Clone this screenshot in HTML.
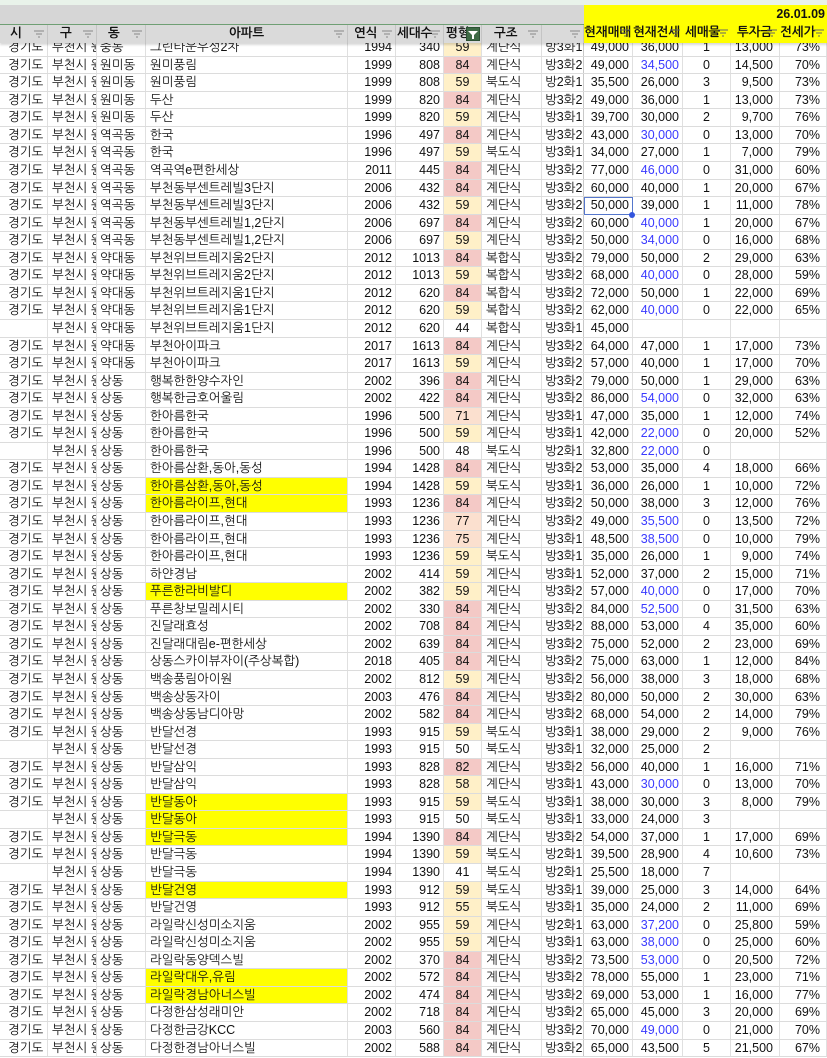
<!DOCTYPE html>
<html><head><meta charset="utf-8"><style>
*{margin:0;padding:0;box-sizing:border-box}
body{width:827px;height:1058px;overflow:hidden;background:#fff;position:relative;font-family:"Liberation Sans","NanumGothic","Noto Sans CJK KR",sans-serif;font-size:12.5px;color:#111}
.r{position:absolute;left:0;width:827px;height:17.6px;top:calc(39.15px + var(--n)*17.55px);display:flex;border-bottom:1px solid #dcdcdc;line-height:17px}
.r i{font-style:normal;display:block;height:100%;overflow:hidden;white-space:nowrap;border-right:1px solid #e0e0e0;padding:0 3px}
.r i:nth-child(1){width:48px;padding-left:8px}
.r i:nth-child(2){width:49px;padding-left:4px}
.r i:nth-child(3){width:49px;padding-left:3px}
.r i:nth-child(4){width:202px;padding-left:4px}
.r i:nth-child(5){width:48px;text-align:right}
.r i:nth-child(6){width:48px;text-align:right}
.r i:nth-child(7){width:38px;text-align:center}
.r i:nth-child(8){width:60px;padding-left:4px}
.r i:nth-child(9){width:42px;text-align:right;padding-right:1px;border-right:1px solid #c8c8c8}
.r i:nth-child(10){width:49px;text-align:right}
.r i:nth-child(11){width:50px;text-align:right}
.r i:nth-child(12){width:48px;text-align:center}
.r i:nth-child(13){width:49px;text-align:right;padding-right:6px}
.r i:nth-child(14){width:47px;text-align:right;padding-right:6px}
.r i.h{background:#ffff00}
.r i.p{background:#f4c9c6}
.r i.y{background:#fff0c8}
.r i.o{background:#fbe0cf}
.r i.b{color:#3a3aff}
.top{position:absolute;left:0;top:0;width:827px;height:5px;background:#e9f3ea;z-index:5}
.band{position:absolute;left:0;top:5px;width:827px;height:19px;background:#d6d6d6;z-index:5}
.hdr{position:absolute;left:0;top:24px;width:827px;height:19px;background:#dadada;border-top:1px solid #6f9f74;z-index:5;display:flex;font-weight:bold;font-size:12.5px;line-height:17px;box-shadow:0 2px 2px rgba(0,0,0,.15)}
.hdr i{font-style:normal;display:block;height:100%;overflow:hidden;white-space:nowrap;position:relative;border-right:1px solid #c4c4c4}
.hdr svg{position:absolute;right:3px;top:5px}
.yel{position:absolute;left:584px;top:5px;width:243px;height:38px;background:#ffff00;z-index:6}
.yel b{position:absolute;right:2px;top:2px;font-size:12.5px}
.yel .hd{position:absolute;top:19px;left:0;display:flex;font-weight:bold;line-height:17px}
.yel .hd i{font-style:normal;display:block;overflow:hidden;white-space:nowrap;position:relative;height:18px}
.yel .hd svg{position:absolute;right:3px;top:5px}
.sel{position:absolute;left:584px;top:calc(39.15px + 9*17.55px);width:49px;height:18px;border:1.5px solid #5577cc;z-index:3}
.dot{position:absolute;left:629px;top:calc(39.15px + 10*17.55px - 3px);width:6px;height:6px;border-radius:3px;background:#3355dd;z-index:4}
</style></head><body>
<div class="top"></div>
<div class="band"></div>
<div class="hdr">
<i style="width:48px;padding-left:10px">시<svg width="10" height="8"><path d="M0 1H10M2 4H8M4 7H6" stroke="#888" stroke-width="1"/></svg></i>
<i style="width:49px;padding-left:12px">구<svg width="10" height="8"><path d="M0 1H10M2 4H8M4 7H6" stroke="#888" stroke-width="1"/></svg></i>
<i style="width:49px;padding-left:11px">동<svg width="10" height="8"><path d="M0 1H10M2 4H8M4 7H6" stroke="#888" stroke-width="1"/></svg></i>
<i style="width:202px;text-align:center">아파트<svg width="10" height="8"><path d="M0 1H10M2 4H8M4 7H6" stroke="#888" stroke-width="1"/></svg></i>
<i style="width:48px;padding-left:6px">연식<svg width="10" height="8"><path d="M0 1H10M2 4H8M4 7H6" stroke="#888" stroke-width="1"/></svg></i>
<i style="width:48px;padding-left:1px">세대수<svg width="10" height="8"><path d="M0 1H10M2 4H8M4 7H6" stroke="#888" stroke-width="1"/></svg></i>
<i style="width:38px;padding-left:2px">평형<span style="position:absolute;right:1px;top:2px;width:14px;height:14px;background:#3e6b45;border:1px solid #2c5133"><svg width="10" height="8" style="right:1px;top:3px"><path d="M0 0H10L6 4V8H4V4Z" fill="#fff"/></svg></span></i>
<i style="width:60px;padding-left:12px">구조<svg width="10" height="8"><path d="M0 1H10M2 4H8M4 7H6" stroke="#888" stroke-width="1"/></svg></i>
<i style="width:42px"><svg width="10" height="8"><path d="M0 1H10M2 4H8M4 7H6" stroke="#888" stroke-width="1"/></svg></i>
</div>
<div class="yel"><b>26.01.09</b>
<div class="hd">
<i style="width:49px">현재매매<svg width="10" height="8"><path d="M0 1H10M2 4H8M4 7H6" stroke="#666" stroke-width="1"/></svg></i>
<i style="width:50px">현재전세<svg width="10" height="8"><path d="M0 1H10M2 4H8M4 7H6" stroke="#666" stroke-width="1"/></svg></i>
<i style="width:48px;padding-left:2px">세매물<svg width="10" height="8"><path d="M0 1H10M2 4H8M4 7H6" stroke="#666" stroke-width="1"/></svg></i>
<i style="width:49px;padding-left:6px">투자금<svg width="10" height="8"><path d="M0 1H10M2 4H8M4 7H6" stroke="#666" stroke-width="1"/></svg></i>
<i style="width:47px">전세가<svg width="10" height="8"><path d="M0 1H10M2 4H8M4 7H6" stroke="#666" stroke-width="1"/></svg></i>
</div></div>

<div class="r" style="--n:0"><i>경기도</i><i>부천시 원미구</i><i>중동</i><i>그린타운우성2차</i><i>1994</i><i>340</i><i class="y">59</i><i>계단식</i><i>방3화1</i><i>49,000</i><i>36,000</i><i>1</i><i>13,000</i><i>73%</i></div>
<div class="r" style="--n:1"><i>경기도</i><i>부천시 원미구</i><i>원미동</i><i>원미풍림</i><i>1999</i><i>808</i><i class="p">84</i><i>계단식</i><i>방3화2</i><i>49,000</i><i class="b">34,500</i><i>0</i><i>14,500</i><i>70%</i></div>
<div class="r" style="--n:2"><i>경기도</i><i>부천시 원미구</i><i>원미동</i><i>원미풍림</i><i>1999</i><i>808</i><i class="y">59</i><i>북도식</i><i>방2화1</i><i>35,500</i><i>26,000</i><i>3</i><i>9,500</i><i>73%</i></div>
<div class="r" style="--n:3"><i>경기도</i><i>부천시 원미구</i><i>원미동</i><i>두산</i><i>1999</i><i>820</i><i class="p">84</i><i>계단식</i><i>방3화2</i><i>49,000</i><i>36,000</i><i>1</i><i>13,000</i><i>73%</i></div>
<div class="r" style="--n:4"><i>경기도</i><i>부천시 원미구</i><i>원미동</i><i>두산</i><i>1999</i><i>820</i><i class="y">59</i><i>계단식</i><i>방3화1</i><i>39,700</i><i>30,000</i><i>2</i><i>9,700</i><i>76%</i></div>
<div class="r" style="--n:5"><i>경기도</i><i>부천시 원미구</i><i>역곡동</i><i>한국</i><i>1996</i><i>497</i><i class="p">84</i><i>계단식</i><i>방3화2</i><i>43,000</i><i class="b">30,000</i><i>0</i><i>13,000</i><i>70%</i></div>
<div class="r" style="--n:6"><i>경기도</i><i>부천시 원미구</i><i>역곡동</i><i>한국</i><i>1996</i><i>497</i><i class="y">59</i><i>북도식</i><i>방3화1</i><i>34,000</i><i>27,000</i><i>1</i><i>7,000</i><i>79%</i></div>
<div class="r" style="--n:7"><i>경기도</i><i>부천시 원미구</i><i>역곡동</i><i>역곡역e편한세상</i><i>2011</i><i>445</i><i class="p">84</i><i>계단식</i><i>방3화2</i><i>77,000</i><i class="b">46,000</i><i>0</i><i>31,000</i><i>60%</i></div>
<div class="r" style="--n:8"><i>경기도</i><i>부천시 원미구</i><i>역곡동</i><i>부천동부센트레빌3단지</i><i>2006</i><i>432</i><i class="p">84</i><i>계단식</i><i>방3화2</i><i>60,000</i><i>40,000</i><i>1</i><i>20,000</i><i>67%</i></div>
<div class="r" style="--n:9"><i>경기도</i><i>부천시 원미구</i><i>역곡동</i><i>부천동부센트레빌3단지</i><i>2006</i><i>432</i><i class="y">59</i><i>계단식</i><i>방3화2</i><i>50,000</i><i>39,000</i><i>1</i><i>11,000</i><i>78%</i></div>
<div class="r" style="--n:10"><i>경기도</i><i>부천시 원미구</i><i>역곡동</i><i>부천동부센트레빌1,2단지</i><i>2006</i><i>697</i><i class="p">84</i><i>계단식</i><i>방3화2</i><i>60,000</i><i class="b">40,000</i><i>1</i><i>20,000</i><i>67%</i></div>
<div class="r" style="--n:11"><i>경기도</i><i>부천시 원미구</i><i>역곡동</i><i>부천동부센트레빌1,2단지</i><i>2006</i><i>697</i><i class="y">59</i><i>계단식</i><i>방3화2</i><i>50,000</i><i class="b">34,000</i><i>0</i><i>16,000</i><i>68%</i></div>
<div class="r" style="--n:12"><i>경기도</i><i>부천시 원미구</i><i>약대동</i><i>부천위브트레지움2단지</i><i>2012</i><i>1013</i><i class="p">84</i><i>복합식</i><i>방3화2</i><i>79,000</i><i>50,000</i><i>2</i><i>29,000</i><i>63%</i></div>
<div class="r" style="--n:13"><i>경기도</i><i>부천시 원미구</i><i>약대동</i><i>부천위브트레지움2단지</i><i>2012</i><i>1013</i><i class="y">59</i><i>복합식</i><i>방3화2</i><i>68,000</i><i class="b">40,000</i><i>0</i><i>28,000</i><i>59%</i></div>
<div class="r" style="--n:14"><i>경기도</i><i>부천시 원미구</i><i>약대동</i><i>부천위브트레지움1단지</i><i>2012</i><i>620</i><i class="p">84</i><i>복합식</i><i>방3화2</i><i>72,000</i><i>50,000</i><i>1</i><i>22,000</i><i>69%</i></div>
<div class="r" style="--n:15"><i>경기도</i><i>부천시 원미구</i><i>약대동</i><i>부천위브트레지움1단지</i><i>2012</i><i>620</i><i class="y">59</i><i>복합식</i><i>방3화2</i><i>62,000</i><i class="b">40,000</i><i>0</i><i>22,000</i><i>65%</i></div>
<div class="r" style="--n:16"><i></i><i>부천시 원미구</i><i>약대동</i><i>부천위브트레지움1단지</i><i>2012</i><i>620</i><i>44</i><i>복합식</i><i>방3화1</i><i>45,000</i><i></i><i></i><i></i><i></i></div>
<div class="r" style="--n:17"><i>경기도</i><i>부천시 원미구</i><i>약대동</i><i>부천아이파크</i><i>2017</i><i>1613</i><i class="p">84</i><i>계단식</i><i>방3화2</i><i>64,000</i><i>47,000</i><i>1</i><i>17,000</i><i>73%</i></div>
<div class="r" style="--n:18"><i>경기도</i><i>부천시 원미구</i><i>약대동</i><i>부천아이파크</i><i>2017</i><i>1613</i><i class="y">59</i><i>계단식</i><i>방3화2</i><i>57,000</i><i>40,000</i><i>1</i><i>17,000</i><i>70%</i></div>
<div class="r" style="--n:19"><i>경기도</i><i>부천시 원미구</i><i>상동</i><i>행복한한양수자인</i><i>2002</i><i>396</i><i class="p">84</i><i>계단식</i><i>방3화2</i><i>79,000</i><i>50,000</i><i>1</i><i>29,000</i><i>63%</i></div>
<div class="r" style="--n:20"><i>경기도</i><i>부천시 원미구</i><i>상동</i><i>행복한금호어울림</i><i>2002</i><i>422</i><i class="p">84</i><i>계단식</i><i>방3화2</i><i>86,000</i><i class="b">54,000</i><i>0</i><i>32,000</i><i>63%</i></div>
<div class="r" style="--n:21"><i>경기도</i><i>부천시 원미구</i><i>상동</i><i>한아름한국</i><i>1996</i><i>500</i><i class="o">71</i><i>계단식</i><i>방3화1</i><i>47,000</i><i>35,000</i><i>1</i><i>12,000</i><i>74%</i></div>
<div class="r" style="--n:22"><i>경기도</i><i>부천시 원미구</i><i>상동</i><i>한아름한국</i><i>1996</i><i>500</i><i class="y">59</i><i>계단식</i><i>방3화1</i><i>42,000</i><i class="b">22,000</i><i>0</i><i>20,000</i><i>52%</i></div>
<div class="r" style="--n:23"><i></i><i>부천시 원미구</i><i>상동</i><i>한아름한국</i><i>1996</i><i>500</i><i>48</i><i>북도식</i><i>방2화1</i><i>32,800</i><i class="b">22,000</i><i>0</i><i></i><i></i></div>
<div class="r" style="--n:24"><i>경기도</i><i>부천시 원미구</i><i>상동</i><i>한아름삼환,동아,동성</i><i>1994</i><i>1428</i><i class="p">84</i><i>계단식</i><i>방3화2</i><i>53,000</i><i>35,000</i><i>4</i><i>18,000</i><i>66%</i></div>
<div class="r" style="--n:25"><i>경기도</i><i>부천시 원미구</i><i>상동</i><i class="h">한아름삼환,동아,동성</i><i>1994</i><i>1428</i><i class="y">59</i><i>북도식</i><i>방3화1</i><i>36,000</i><i>26,000</i><i>1</i><i>10,000</i><i>72%</i></div>
<div class="r" style="--n:26"><i>경기도</i><i>부천시 원미구</i><i>상동</i><i class="h">한아름라이프,현대</i><i>1993</i><i>1236</i><i class="p">84</i><i>계단식</i><i>방3화2</i><i>50,000</i><i>38,000</i><i>3</i><i>12,000</i><i>76%</i></div>
<div class="r" style="--n:27"><i>경기도</i><i>부천시 원미구</i><i>상동</i><i>한아름라이프,현대</i><i>1993</i><i>1236</i><i class="o">77</i><i>계단식</i><i>방3화2</i><i>49,000</i><i class="b">35,500</i><i>0</i><i>13,500</i><i>72%</i></div>
<div class="r" style="--n:28"><i>경기도</i><i>부천시 원미구</i><i>상동</i><i>한아름라이프,현대</i><i>1993</i><i>1236</i><i class="o">75</i><i>계단식</i><i>방3화1</i><i>48,500</i><i class="b">38,500</i><i>0</i><i>10,000</i><i>79%</i></div>
<div class="r" style="--n:29"><i>경기도</i><i>부천시 원미구</i><i>상동</i><i>한아름라이프,현대</i><i>1993</i><i>1236</i><i class="y">59</i><i>북도식</i><i>방3화1</i><i>35,000</i><i>26,000</i><i>1</i><i>9,000</i><i>74%</i></div>
<div class="r" style="--n:30"><i>경기도</i><i>부천시 원미구</i><i>상동</i><i>하얀경남</i><i>2002</i><i>414</i><i class="y">59</i><i>계단식</i><i>방3화1</i><i>52,000</i><i>37,000</i><i>2</i><i>15,000</i><i>71%</i></div>
<div class="r" style="--n:31"><i>경기도</i><i>부천시 원미구</i><i>상동</i><i class="h">푸른한라비발디</i><i>2002</i><i>382</i><i class="y">59</i><i>계단식</i><i>방3화2</i><i>57,000</i><i class="b">40,000</i><i>0</i><i>17,000</i><i>70%</i></div>
<div class="r" style="--n:32"><i>경기도</i><i>부천시 원미구</i><i>상동</i><i>푸른창보밀레시티</i><i>2002</i><i>330</i><i class="p">84</i><i>계단식</i><i>방3화2</i><i>84,000</i><i class="b">52,500</i><i>0</i><i>31,500</i><i>63%</i></div>
<div class="r" style="--n:33"><i>경기도</i><i>부천시 원미구</i><i>상동</i><i>진달래효성</i><i>2002</i><i>708</i><i class="p">84</i><i>계단식</i><i>방3화2</i><i>88,000</i><i>53,000</i><i>4</i><i>35,000</i><i>60%</i></div>
<div class="r" style="--n:34"><i>경기도</i><i>부천시 원미구</i><i>상동</i><i>진달래대림e-편한세상</i><i>2002</i><i>639</i><i class="p">84</i><i>계단식</i><i>방3화2</i><i>75,000</i><i>52,000</i><i>2</i><i>23,000</i><i>69%</i></div>
<div class="r" style="--n:35"><i>경기도</i><i>부천시 원미구</i><i>상동</i><i>상동스카이뷰자이(주상복합)</i><i>2018</i><i>405</i><i class="p">84</i><i>계단식</i><i>방3화2</i><i>75,000</i><i>63,000</i><i>1</i><i>12,000</i><i>84%</i></div>
<div class="r" style="--n:36"><i>경기도</i><i>부천시 원미구</i><i>상동</i><i>백송풍림아이원</i><i>2002</i><i>812</i><i class="y">59</i><i>계단식</i><i>방3화2</i><i>56,000</i><i>38,000</i><i>3</i><i>18,000</i><i>68%</i></div>
<div class="r" style="--n:37"><i>경기도</i><i>부천시 원미구</i><i>상동</i><i>백송상동자이</i><i>2003</i><i>476</i><i class="p">84</i><i>계단식</i><i>방3화2</i><i>80,000</i><i>50,000</i><i>2</i><i>30,000</i><i>63%</i></div>
<div class="r" style="--n:38"><i>경기도</i><i>부천시 원미구</i><i>상동</i><i>백송상동남디아망</i><i>2002</i><i>582</i><i class="p">84</i><i>계단식</i><i>방3화2</i><i>68,000</i><i>54,000</i><i>2</i><i>14,000</i><i>79%</i></div>
<div class="r" style="--n:39"><i>경기도</i><i>부천시 원미구</i><i>상동</i><i>반달선경</i><i>1993</i><i>915</i><i class="y">59</i><i>북도식</i><i>방3화1</i><i>38,000</i><i>29,000</i><i>2</i><i>9,000</i><i>76%</i></div>
<div class="r" style="--n:40"><i></i><i>부천시 원미구</i><i>상동</i><i>반달선경</i><i>1993</i><i>915</i><i>50</i><i>북도식</i><i>방3화1</i><i>32,000</i><i>25,000</i><i>2</i><i></i><i></i></div>
<div class="r" style="--n:41"><i>경기도</i><i>부천시 원미구</i><i>상동</i><i>반달삼익</i><i>1993</i><i>828</i><i class="p">82</i><i>계단식</i><i>방3화2</i><i>56,000</i><i>40,000</i><i>1</i><i>16,000</i><i>71%</i></div>
<div class="r" style="--n:42"><i>경기도</i><i>부천시 원미구</i><i>상동</i><i>반달삼익</i><i>1993</i><i>828</i><i class="y">58</i><i>계단식</i><i>방3화1</i><i>43,000</i><i class="b">30,000</i><i>0</i><i>13,000</i><i>70%</i></div>
<div class="r" style="--n:43"><i>경기도</i><i>부천시 원미구</i><i>상동</i><i class="h">반달동아</i><i>1993</i><i>915</i><i class="y">59</i><i>북도식</i><i>방3화1</i><i>38,000</i><i>30,000</i><i>3</i><i>8,000</i><i>79%</i></div>
<div class="r" style="--n:44"><i></i><i>부천시 원미구</i><i>상동</i><i class="h">반달동아</i><i>1993</i><i>915</i><i>50</i><i>북도식</i><i>방3화1</i><i>33,000</i><i>24,000</i><i>3</i><i></i><i></i></div>
<div class="r" style="--n:45"><i>경기도</i><i>부천시 원미구</i><i>상동</i><i class="h">반달극동</i><i>1994</i><i>1390</i><i class="p">84</i><i>계단식</i><i>방3화2</i><i>54,000</i><i>37,000</i><i>1</i><i>17,000</i><i>69%</i></div>
<div class="r" style="--n:46"><i>경기도</i><i>부천시 원미구</i><i>상동</i><i>반달극동</i><i>1994</i><i>1390</i><i class="y">59</i><i>북도식</i><i>방2화1</i><i>39,500</i><i>28,900</i><i>4</i><i>10,600</i><i>73%</i></div>
<div class="r" style="--n:47"><i></i><i>부천시 원미구</i><i>상동</i><i>반달극동</i><i>1994</i><i>1390</i><i>41</i><i>북도식</i><i>방2화1</i><i>25,500</i><i>18,000</i><i>7</i><i></i><i></i></div>
<div class="r" style="--n:48"><i>경기도</i><i>부천시 원미구</i><i>상동</i><i class="h">반달건영</i><i>1993</i><i>912</i><i class="y">59</i><i>북도식</i><i>방3화1</i><i>39,000</i><i>25,000</i><i>3</i><i>14,000</i><i>64%</i></div>
<div class="r" style="--n:49"><i>경기도</i><i>부천시 원미구</i><i>상동</i><i>반달건영</i><i>1993</i><i>912</i><i class="y">55</i><i>북도식</i><i>방3화1</i><i>35,000</i><i>24,000</i><i>2</i><i>11,000</i><i>69%</i></div>
<div class="r" style="--n:50"><i>경기도</i><i>부천시 원미구</i><i>상동</i><i>라일락신성미소지움</i><i>2002</i><i>955</i><i class="y">59</i><i>계단식</i><i>방2화1</i><i>63,000</i><i class="b">37,200</i><i>0</i><i>25,800</i><i>59%</i></div>
<div class="r" style="--n:51"><i>경기도</i><i>부천시 원미구</i><i>상동</i><i>라일락신성미소지움</i><i>2002</i><i>955</i><i class="y">59</i><i>계단식</i><i>방3화1</i><i>63,000</i><i class="b">38,000</i><i>0</i><i>25,000</i><i>60%</i></div>
<div class="r" style="--n:52"><i>경기도</i><i>부천시 원미구</i><i>상동</i><i>라일락동양덱스빌</i><i>2002</i><i>370</i><i class="p">84</i><i>계단식</i><i>방3화2</i><i>73,500</i><i class="b">53,000</i><i>0</i><i>20,500</i><i>72%</i></div>
<div class="r" style="--n:53"><i>경기도</i><i>부천시 원미구</i><i>상동</i><i class="h">라일락대우,유림</i><i>2002</i><i>572</i><i class="p">84</i><i>계단식</i><i>방3화2</i><i>78,000</i><i>55,000</i><i>1</i><i>23,000</i><i>71%</i></div>
<div class="r" style="--n:54"><i>경기도</i><i>부천시 원미구</i><i>상동</i><i class="h">라일락경남아너스빌</i><i>2002</i><i>474</i><i class="p">84</i><i>계단식</i><i>방3화2</i><i>69,000</i><i>53,000</i><i>1</i><i>16,000</i><i>77%</i></div>
<div class="r" style="--n:55"><i>경기도</i><i>부천시 원미구</i><i>상동</i><i>다정한삼성래미안</i><i>2002</i><i>718</i><i class="p">84</i><i>계단식</i><i>방3화2</i><i>65,000</i><i>45,000</i><i>3</i><i>20,000</i><i>69%</i></div>
<div class="r" style="--n:56"><i>경기도</i><i>부천시 원미구</i><i>상동</i><i>다정한금강KCC</i><i>2003</i><i>560</i><i class="p">84</i><i>계단식</i><i>방3화2</i><i>70,000</i><i class="b">49,000</i><i>0</i><i>21,000</i><i>70%</i></div>
<div class="r" style="--n:57"><i>경기도</i><i>부천시 원미구</i><i>상동</i><i>다정한경남아너스빌</i><i>2002</i><i>588</i><i class="p">84</i><i>계단식</i><i>방3화2</i><i>65,000</i><i>43,500</i><i>5</i><i>21,500</i><i>67%</i></div>
<div class="sel"></div><div class="dot"></div>
</body></html>
